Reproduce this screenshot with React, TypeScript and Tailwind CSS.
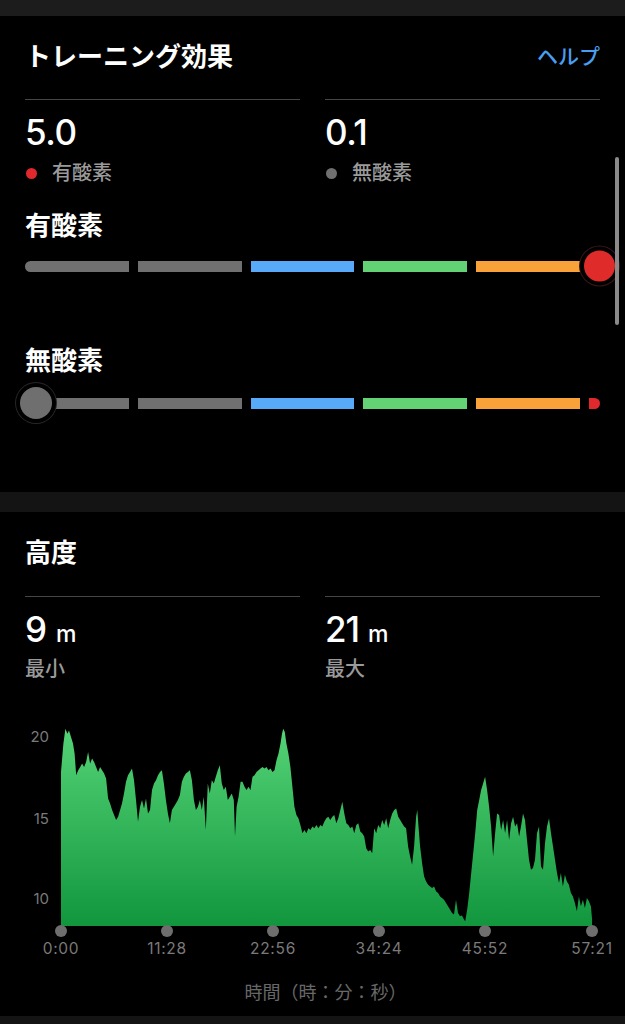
import React from "react";

const RAW: [number, number][] = [
  [152, 215], [158, 130], [163, 85], [168, 100], [172, 90], [177, 110], [182, 130], [186, 160], [190, 225], [195, 210], [200, 200], [205, 190], [210, 200], [215, 185], [220, 155], [225, 190], [230, 175], [235, 185], [240, 200], [245, 215], [250, 200], [255, 210], [260, 220], [265, 235], [270, 295], [275, 310], [280, 330], [285, 345], [290, 360], [295, 350], [300, 330], [305, 310], [310, 280], [315, 245], [320, 225], [325, 215], [330, 205], [335, 240], [340, 300], [345, 365], [350, 320], [355, 300], [360, 325], [365, 295], [370, 340], [375, 330], [380, 270], [385, 250], [390, 240], [395, 225], [400, 215], [405, 210], [410, 250], [415, 300], [420, 340], [425, 370], [430, 330], [435, 320], [440, 310], [445, 300], [450, 285], [455, 245], [460, 230], [465, 220], [470, 215], [475, 210], [480, 240], [485, 300], [490, 330], [495, 320], [500, 300], [505, 330], [510, 290], [515, 390], [520, 250], [525, 280], [530, 240], [535, 250], [540, 230], [545, 210], [550, 195], [555, 250], [560, 270], [565, 260], [570, 300], [575, 290], [580, 280], [585, 300], [588, 410], [592, 320], [597, 290], [602, 245], [607, 245], [612, 260], [617, 270], [622, 260], [627, 270], [632, 230], [637, 225], [642, 215], [647, 210], [652, 205], [657, 200], [662, 205], [667, 200], [672, 210], [677, 205], [682, 215], [687, 210], [692, 180], [697, 160], [702, 130], [706, 100], [709, 85], [713, 95], [717, 130], [722, 160], [727, 200], [732, 260], [737, 320], [742, 345], [747, 355], [752, 375], [757, 400], [762, 390], [767, 400], [772, 385], [777, 390], [782, 380], [787, 385], [792, 375], [797, 385], [802, 375], [807, 380], [812, 365], [817, 355], [822, 350], [827, 360], [832, 350], [837, 345], [842, 370], [847, 355], [852, 330], [857, 305], [862, 340], [867, 370], [872, 375], [877, 385], [882, 380], [887, 400], [892, 375], [897, 370], [902, 395], [907, 400], [912, 410], [917, 445], [922, 455], [927, 450], [932, 460], [937, 385], [942, 400], [947, 375], [952, 385], [957, 360], [962, 375], [967, 355], [972, 385], [977, 360], [982, 340], [987, 330], [992, 325], [997, 350], [1002, 360], [1007, 370], [1012, 380], [1017, 385], [1022, 440], [1027, 470], [1032, 495], [1037, 440], [1042, 350], [1045, 330], [1048, 380], [1052, 440], [1057, 490], [1062, 530], [1067, 545], [1072, 555], [1077, 560], [1082, 565], [1087, 560], [1092, 575], [1097, 580], [1102, 590], [1107, 595], [1112, 600], [1117, 610], [1122, 620], [1127, 630], [1132, 640], [1137, 645], [1142, 600], [1147, 640], [1152, 650], [1157, 648], [1162, 660], [1165, 665], [1170, 630], [1175, 580], [1180, 520], [1185, 460], [1190, 400], [1195, 330], [1200, 300], [1205, 270], [1210, 250], [1215, 230], [1220, 270], [1225, 320], [1230, 380], [1235, 470], [1240, 400], [1245, 340], [1250, 345], [1255, 390], [1260, 360], [1265, 400], [1270, 360], [1275, 420], [1280, 370], [1285, 350], [1290, 380], [1295, 370], [1300, 410], [1305, 380], [1310, 340], [1315, 360], [1320, 420], [1325, 480], [1330, 510], [1335, 505], [1340, 480], [1345, 400], [1350, 380], [1355, 500], [1360, 510], [1365, 430], [1370, 380], [1375, 355], [1380, 400], [1385, 440], [1390, 480], [1395, 520], [1400, 550], [1405, 520], [1410, 560], [1415, 525], [1420, 545], [1425, 555], [1430, 580], [1435, 590], [1440, 610], [1445, 635], [1450, 590], [1455, 620], [1460, 600], [1465, 625], [1470, 595], [1475, 605], [1480, 620], [1483, 660],
];

const BASE = 925;
const mapX = (x: number) => 61 + (x - 152) * 0.399;
const mapY = (y: number) => Math.min(BASE, 736 + (y - 110) * 0.332);
const AREA =
  `61,${BASE} ` +
  RAW.map(([x, y]) => `${mapX(x).toFixed(1)},${mapY(y).toFixed(1)}`).join(" ") +
  ` 592,${BASE}`;

const TICKS = [
  { x: 61, t: "0:00" },
  { x: 167, t: "11:28" },
  { x: 273, t: "22:56" },
  { x: 379, t: "34:24" },
  { x: 485, t: "45:52" },
  { x: 592, t: "57:21" },
];

function Bar({ variant }: { variant: "aero" | "anaero" }) {
  return (
    <div className="relative flex h-[40px] items-center">
      <div className="flex flex-1 items-center gap-[9px]">
        <div className="h-[11px] flex-1 rounded-l-full bg-[#707070]" />
        <div className="h-[11px] flex-1 bg-[#707070]" />
        <div className="h-[11px] flex-1 bg-[#58aaf8]" />
        <div className="h-[11px] flex-1 bg-[#63d274]" />
        <div className="h-[11px] flex-1 bg-[#f9a23a]" />
        <div className="h-[11px] w-[11px] rounded-r-full bg-[#e0282d]" />
      </div>
      {variant === "aero" ? (
        <div className="absolute right-[-15px] top-1/2 h-[31px] w-[31px] -translate-y-1/2 rounded-full bg-[#e02b2b] shadow-[0_0_0_4px_#000,0_0_0_5px_#3a1616]" />
      ) : (
        <div className="absolute left-[-5px] top-1/2 h-[32px] w-[32px] -translate-y-1/2 rounded-full bg-[#6f6f6f] shadow-[0_0_0_4px_#000,0_0_0_5px_#262626]" />
      )}
    </div>
  );
}

export default function App() {
  return (
    <div className="relative min-h-[1024px] w-full overflow-hidden bg-black font-[Inter,'Noto_Sans_CJK_JP',sans-serif] text-white">
      {/* top band */}
      <div className="h-4 bg-[#1c1c1c]" />

      {/* Training effect */}
      <section className="px-[25px] pb-[69px]">
        <div className="mt-[25px] flex h-[32px] items-center justify-between">
          <h2 className="text-[26px] font-bold leading-[32px]">トレーニング効果</h2>
          <span className="text-[21px] font-medium leading-[32px] text-[#4a9ef0]">ヘルプ</span>
        </div>

        <div className="mt-[26px] grid grid-cols-2 gap-[25px]">
          <div className="border-t border-[#464646]">
            <div className="mt-[12px] text-[35px] font-medium leading-[40px] tracking-[-0.5px]">5.0</div>
            <div className="mt-[9px] flex h-[24px] items-center gap-[15px]">
              <span className="ml-[1px] h-[11px] w-[11px] rounded-full bg-[#e0282d]" />
              <span className="text-[20px] font-medium leading-[24px] text-[#9a9a9a]">有酸素</span>
            </div>
          </div>
          <div className="border-t border-[#464646]">
            <div className="mt-[12px] text-[35px] font-medium leading-[40px] tracking-[-0.5px]">0.1</div>
            <div className="mt-[9px] flex h-[24px] items-center gap-[15px]">
              <span className="ml-[1px] h-[11px] w-[11px] rounded-full bg-[#707070]" />
              <span className="text-[20px] font-medium leading-[24px] text-[#9a9a9a]">無酸素</span>
            </div>
          </div>
        </div>

        <h3 className="mt-[25px] text-[26px] font-bold leading-[32px]">有酸素</h3>
        <div className="mt-[4px]">
          <Bar variant="aero" />
        </div>

        <h3 className="mt-[59px] text-[26px] font-bold leading-[32px]">無酸素</h3>
        <div className="mt-[6px]">
          <Bar variant="anaero" />
        </div>
      </section>

      {/* separator band */}
      <div className="h-5 bg-[#141414]" />

      {/* Altitude */}
      <section>
        <div className="px-[25px]">
          <h3 className="mt-[25px] text-[26px] font-bold leading-[32px]">高度</h3>
          <div className="mt-[27px] grid grid-cols-2 gap-[25px]">
            <div className="border-t border-[#464646]">
              <div className="mt-[12px] flex items-baseline leading-[40px]">
                <span className="text-[35px] font-medium">9</span>
                <span className="ml-[9px] text-[23px] font-medium">m</span>
              </div>
              <div className="mt-[3px] text-[20px] font-medium leading-[24px] text-[#9a9a9a]">最小</div>
            </div>
            <div className="border-t border-[#464646]">
              <div className="mt-[12px] flex items-baseline leading-[40px]">
                <span className="text-[35px] font-medium tracking-[-1px]">21</span>
                <span className="ml-[9px] text-[23px] font-medium">m</span>
              </div>
              <div className="mt-[3px] text-[20px] font-medium leading-[24px] text-[#9a9a9a]">最大</div>
            </div>
          </div>
        </div>

        <svg className="mt-[20px] block" width="625" height="265" viewBox="0 700 625 265">
          <defs>
            <linearGradient id="alt" x1="0" y1="727" x2="0" y2="925" gradientUnits="userSpaceOnUse">
              <stop offset="0" stopColor="#55d376" />
              <stop offset="1" stopColor="#11963e" />
            </linearGradient>
          </defs>
          <polygon points={AREA} fill="url(#alt)" />
          <g fill="#7a7a7a" fontSize="15" fontFamily="Inter, sans-serif" textAnchor="end">
            <text x="49" y="741">20</text>
            <text x="49" y="823">15</text>
            <text x="49" y="903">10</text>
          </g>
          {TICKS.map((t) => (
            <circle key={t.x} cx={t.x} cy={930} r={6} fill="#6e6e6e" />
          ))}
          <g fill="#7a7a7a" fontSize="15.5" fontFamily="Inter, sans-serif" textAnchor="middle" letterSpacing="0.7">
            {TICKS.map((t) => (
              <text key={t.t} x={t.x} y={953}>
                {t.t}
              </text>
            ))}
          </g>
        </svg>

        <div className="mt-[15px] pl-[26px] text-center text-[18px] leading-[24px] text-[#686868]">時間（時：分：秒）</div>
        <div className="mt-[11px] h-[10px] bg-[#141414]" />
      </section>

      {/* scrollbar */}
      <div className="absolute right-[6px] top-[157px] h-[168px] w-[4px] rounded-full bg-[#8a8a8a]" />
    </div>
  );
}
